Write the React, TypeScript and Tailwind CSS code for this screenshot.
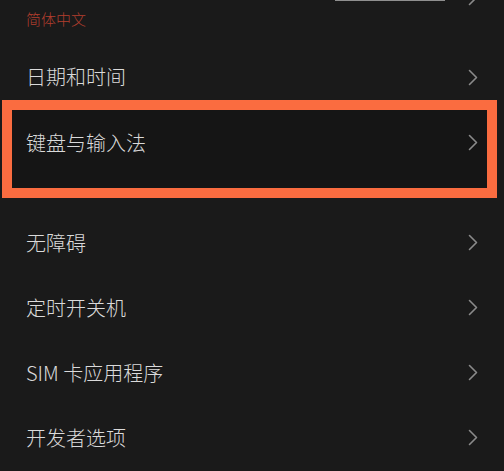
const rows = ['无障碍', '定时开关机', 'SIM 卡应用程序', '开发者选项'];

function Chevron() {
  return (
    <svg width="10" height="17" viewBox="0 0 10 17" fill="none" className="shrink-0">
      <polyline points="1.5,1.5 8.5,8.5 1.5,15.5" stroke="#8a8a8a" strokeWidth="1.6" strokeLinecap="round" strokeLinejoin="round" />
    </svg>
  );
}

function Label({ children }: { children: string }) {
  return <span className="text-[20px] font-light leading-none text-[#dadada]">{children}</span>;
}

function Row({ label }: { label: string }) {
  return (
    <div className="flex h-[65px] items-center justify-between pl-[26px] pr-[26px]">
      <Label>{label}</Label>
      <Chevron />
    </div>
  );
}

export default function App() {
  return (
    <div
      className="flex h-[471px] w-[504px] flex-col overflow-hidden bg-[#1a1a1a]"
      style={{ fontFamily: '"Noto Sans CJK SC", "Noto Sans", sans-serif' }}
    >
      {/* faint strip left from the screenshot above */}
      <div className="ml-[335px] h-[1px] w-[110px] shrink-0 bg-[#8f8f8f]" />

      {/* tail of the language row, its chevron cut off at the top */}
      <div className="flex h-[44px] shrink-0 items-start justify-between pl-[26px] pr-[26px]">
        <span className="mt-[9px] text-[15px] font-light leading-[18px] text-[#b23e2e]">简体中文</span>
        <div className="-mt-[12px]">
          <Chevron />
        </div>
      </div>

      <div className="flex h-[55px] shrink-0 items-center justify-between pl-[26px] pr-[26px] pt-[9px]">
        <Label>日期和时间</Label>
        <Chevron />
      </div>

      {/* highlighted item */}
      <div className="ml-[2px] mr-[7px] h-[98px] shrink-0 border-[10px] border-[#fa6c40] bg-[#151515]">
        <div className="flex h-[65px] items-center justify-between pl-[14px] pr-[9px]">
          <Label>键盘与输入法</Label>
          <Chevron />
        </div>
      </div>

      <div className="flex flex-col pt-[12px]">
        {rows.map((r) => (
          <Row key={r} label={r} />
        ))}
      </div>
    </div>
  );
}
